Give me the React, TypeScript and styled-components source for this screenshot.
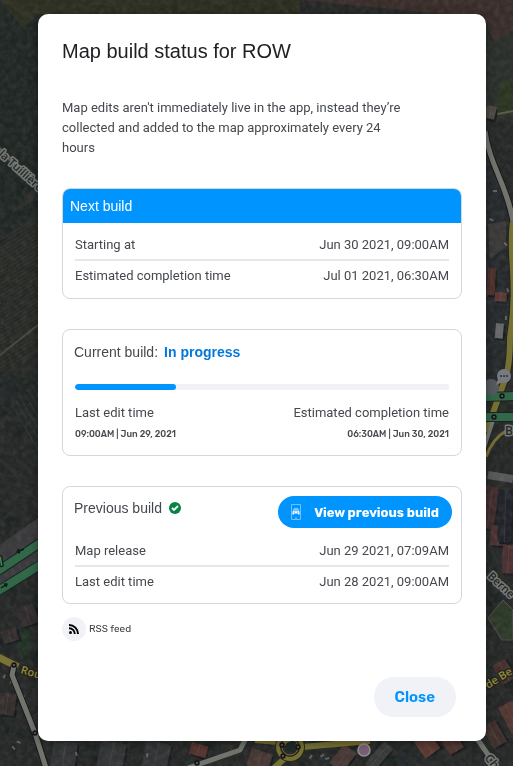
import React from "react";
import styled, { createGlobalStyle } from "styled-components";

const GlobalStyle = createGlobalStyle`
  *, *::before, *::after { box-sizing: border-box; }
  body { margin: 0; background: #222523; color: #45494e; font-family: Roboto, sans-serif; }
  button { border: 0; cursor: pointer; }
  h1, h2, p, dl, dd { margin: 0; }
`;

const Backdrop = styled.svg`
  position: fixed;
  inset: 0;
  width: 100%;
  height: 100%;
`;

const Overlay = styled.main`
  position: relative;
  min-height: 100vh;
  padding: 14px 27px 24px 38px;
  display: flex;
  justify-content: center;
  align-items: flex-start;
`;

const Dialog = styled.section`
  width: 100%;
  max-width: 560px;
  padding: 24px;
  border-radius: 10px;
  background: #fff;
  box-shadow: 0 2px 8px rgba(0, 0, 0, 0.4);
`;

const Title = styled.h1`
  font-family: "Liberation Sans", Arial, sans-serif;
  font-size: 20px;
  line-height: 26px;
  font-weight: 400;
  color: #202124;
`;

const Intro = styled.p`
  max-width: 350px;
  margin-top: 34px;
  font-size: 13px;
  line-height: 20px;
`;

const Card = styled.section`
  margin-top: 30px;
  border: 1px solid #d5d7db;
  border-radius: 8px;
  overflow: hidden;
`;

const BlueHeading = styled.h2`
  padding: 0 7px;
  font-family: "Liberation Sans", Arial, sans-serif;
  font-size: 14px;
  line-height: 34px;
  font-weight: 400;
  color: #fff;
  background: #0094ff;
`;

const CardHeader = styled.div<{ $withAction?: boolean }>`
  display: flex;
  align-items: flex-start;
  justify-content: space-between;
  height: ${(p) => (p.$withAction ? 48 : 54)}px;
  padding: ${(p) => (p.$withAction ? "9px 9px 0 11px" : "10px 11px 0")};
`;

const CardHeading = styled.h2`
  display: flex;
  align-items: center;
  gap: 6px;
  font-family: "Liberation Sans", Arial, sans-serif;
  font-size: 14px;
  line-height: 24px;
  font-weight: 400;
`;

const Status = styled.strong`
  color: #0078dc;
  font-weight: 700;
`;

const Rows = styled.dl<{ $compact?: boolean }>`
  padding: ${(p) => (p.$compact ? "1px 12px 7px" : "7px 12px 8px")};
`;

const Row = styled.div`
  display: flex;
  justify-content: space-between;
  font-size: 13px;
  line-height: 29px;
  & + & { border-top: 2px solid #e6e7e9; }
`;

const Progress = styled.progress`
  display: block;
  appearance: none;
  width: calc(100% - 24px);
  height: 6px;
  margin: 0 12px;
  border: 0;
  border-radius: 3px;
  overflow: hidden;
  background: #f0f2f7;
  &::-webkit-progress-bar { background: #f0f2f7; border-radius: 3px; }
  &::-webkit-progress-value { background: #0094ff; border-radius: 3px; }
`;

const Times = styled.dl`
  display: flex;
  justify-content: space-between;
  padding: 12px 12px 11px;
`;

const TimeItem = styled.div<{ $end?: boolean }>`
  text-align: ${(p) => (p.$end ? "right" : "left")};
  dt { font-size: 13px; line-height: 22px; }
  dd { font-family: Rubik, Roboto, sans-serif; font-size: 9px; line-height: 20px; font-weight: 500; }
`;

const PrimaryButton = styled.button`
  display: flex;
  align-items: center;
  gap: 12px;
  height: 32px;
  padding: 0 13px 0 12px;
  border-radius: 16px;
  font-family: Rubik, Roboto, sans-serif;
  font-size: 13px;
  font-weight: 700;
  color: #fff;
  background: #0094ff;
`;

const FeedLink = styled.a`
  display: inline-flex;
  align-items: center;
  gap: 3px;
  margin-top: 13px;
  font-family: Rubik, Roboto, sans-serif;
  font-size: 10px;
  line-height: 24px;
  color: #3c4045;
  text-decoration: none;
`;

const FeedBadge = styled.span`
  display: grid;
  place-items: center;
  width: 24px;
  height: 24px;
  border-radius: 50%;
  background: #f0f2f7;
`;

const Footer = styled.footer`
  display: flex;
  justify-content: flex-end;
  padding: 36px 6px 0 0;
`;

const CloseButton = styled.button`
  height: 40px;
  padding: 0 21px;
  border-radius: 20px;
  font-family: Rubik, Roboto, sans-serif;
  font-size: 15px;
  font-weight: 600;
  color: #0094ff;
  background: #f0f2f7;
`;

const random = (seed: number) => {
  const n = Math.sin(seed * 127.1) * 43758.5453;
  return n - Math.floor(n);
};

const foliage = Array.from({ length: 520 }, (_, i) => ({
  x: random(i + 1) * 513,
  y: 385 + random(i + 701) * 381,
  r: 2 + random(i + 1409) * 6,
  fill: ["#1b2321", "#272c2a", "#24292c", "#2d2c29", "#1c2120"][i % 5],
}));

const roofs = [
  [488, 268, 8, 27, 3, "#4b2d28"], [495, 292, 12, 9, 4, "#5a3935"],
  [496, 323, 8, 15, 5, "#656767"], [487, 105, 10, 13, 12, "#48463f"],
  [486, 486, 13, 42, 7, "#3e2a2b"], [491, 525, 17, 20, 4, "#4a3031"],
  [503, 545, 12, 28, 3, "#4a3030"], [499, 490, 14, 52, 2, "#202329"],
  [492, 666, 15, 22, -30, "#432e2b"], [498, 708, 16, 30, -28, "#513530"],
  [482, 728, 15, 24, -30, "#3e2e2b"], [192, 742, 17, 12, 15, "#54322c"],
  [252, 748, 22, 18, 18, "#453632"], [344, 744, 16, 24, 38, "#453633"],
  [414, 742, 18, 20, -35, "#5a3931"], [440, 738, 16, 20, -30, "#4c332d"],
  [0, 632, 16, 13, -18, "#332d2d"], [16, 609, 18, 20, -20, "#302a2c"],
  [0, 692, 17, 22, 8, "#332d2b"], [384, 741, 12, 30, 40, "#373838"],
  [54, 740, 24, 28, 8, "#303234"], [101, 740, 26, 28, 10, "#313335"],
  [147, 740, 25, 28, 12, "#303234"],
] as const;

const cars = [[493, 190], [490, 218], [505, 242], [508, 288], [507, 316], [6, 675], [14, 681], [25, 697], [28, 710], [20, 744], [14, 750], [76, 756], [146, 757], [309, 758], [320, 756], [325, 758]];
const junctions = [[14, 665], [35, 733], [502, 396], [494, 417], [197, 763], [298, 747], [283, 756], [282, 745]];

const MapBackground = () => (
  <Backdrop viewBox="0 0 513 766" preserveAspectRatio="xMidYMin slice" aria-hidden="true">
    <defs>
      <filter id="ground" x="0" y="0" width="100%" height="100%">
        <feTurbulence type="fractalNoise" baseFrequency="0.18" numOctaves="4" seed="8" />
        <feColorMatrix values="0 0 0 0 .28  0 0 0 0 .28  0 0 0 0 .27  .9 .9 0 0 -.65" />
      </filter>
    </defs>
    <rect width="513" height="766" fill="#242726" />
    {foliage.map((f, i) => <circle key={i} cx={f.x} cy={f.y} r={f.r} fill={f.fill} opacity=".65" />)}
    <path d="M0 0H55L38 60V385H0Z" fill="#1f2623" />
    <path d="M0 0H160V14H40L23 28Z" fill="#30321f" opacity=".7" />
    <path d="M160 0H300V14H160Z" fill="#2b2c20" />
    <path d="M300 0H513V31L494 43L484 18Z" fill="#382c29" />
    <path d="M482 20L493 43L513 32V125L486 109Z" fill="#292e2a" />
    <path d="M501 82l12-6v37l-19 7Z" fill="#2a3320" />
    <path d="M484 140L495 165L513 222V385H484Z" fill="#25292b" />
    <path d="M488 224l18-3v26l-16 12Z" fill="#3a3836" />
    <path d="M0 245L38 207V382L0 372Z" fill="#252824" />
    {Array.from({ length: 34 }, (_, i) => (
      <path key={i} d={`M0 ${240 + i * 4}L38 ${217 + i * 4}`} stroke="#353831" strokeWidth=".6" />
    ))}
    {Array.from({ length: 8 }, (_, i) => (
      <path key={i} d={`M${12 + i * 4} ${405 - i * 4}l32 55`} stroke="#323d33" strokeWidth=".7" />
    ))}
    <path d="M0 355L38 325" stroke="#4a453f" strokeWidth="2" />
    <path d="M12 212L38 200V188L29 192Z" fill="#2b2c29" />
    <circle cx="23" cy="187" r="2" fill="#12191d" />
    <path d="M488 618L503 600L513 610V640L502 640Z" fill="#2b3827" stroke="#514c43" />
    <path d="M488 116l25-5" stroke="#5b5a4d" strokeWidth="2" />
    <path d="M488 475l25 4" stroke="#555759" strokeWidth="8" />
    <path d="M0 545L38 518V570L0 592Z" fill="#39393b" />
    <path d="M16 636l10-10 10 18-16 16Z" fill="#223024" />
    {roofs.map(([x, y, w, h, a, fill], i) => (
      <g key={i} transform={`rotate(${a} ${x} ${y})`}>
        <rect x={x + 2} y={y + 2} width={w} height={h} fill="#171b1c" />
        <rect x={x} y={y} width={w} height={h} fill={fill} />
        <path d={`M${x + w / 2} ${y}v${h}`} stroke="#8c7067" strokeWidth=".5" opacity=".4" />
      </g>
    ))}
    {cars.map(([x, y], i) => <rect key={i} x={x} y={y} width="4" height="2" fill="#858888" opacity=".6" transform={`rotate(${i * 23} ${x} ${y})`} />)}
    <rect width="513" height="766" filter="url(#ground)" opacity=".2" />

    <g fill="none" strokeLinejoin="round">
      <path d="M-3 147Q22 170 43 190" stroke="#555852" strokeWidth="4" />
      <path d="M485 131C489 164 508 187 513 222" stroke="#171a1a" strokeWidth="7" />
      <path d="M485 131C489 164 508 187 513 222" stroke="#71736c" strokeWidth="5" />
      <path d="M513 222C508 255 519 280 510 338Q510 370 503 385L486 432" stroke="#24251b" strokeWidth="8" />
      <path d="M513 222C508 255 519 280 510 338Q510 370 503 385L486 432" stroke="#777034" strokeWidth="6" />
      <path d="M494 417L484 448" stroke="#74766f" strokeWidth="4" />
      <path d="M486 457Q493 438 506 431" stroke="#777034" strokeWidth="3" />
      <path d="M-2 571L40 543M-2 591L40 565M484 397L515 396M484 417H515" stroke="#18251e" strokeWidth="10" />
      <path d="M-2 571L40 543M-2 591L40 565M484 397L515 396M484 417H515" stroke="#326749" strokeWidth="8" />
      <path d="M24 549l-7 3m2-3l-2 3 3 1M1 588l6-4m-3 0l3 0-1 3" stroke="#101b16" strokeWidth="1.5" />
      <path d="M-2 657L18 667" stroke="#7b7334" strokeWidth="7" />
      <path d="M14 666L12 675L35 733L46 768" stroke="#171a1a" strokeWidth="7" />
      <path d="M14 666L12 675L35 733L46 768M245 740L240 750L188 768M478 740L491 759" stroke="#71736c" strokeWidth="5" />
      <path d="M255 740L290 743M302 747L370 741M286 757L272 770" stroke="#777034" strokeWidth="6" />
      <circle cx="290" cy="747" r="12" stroke="#282819" strokeWidth="6" />
      <circle cx="290" cy="747" r="12" stroke="#777034" strokeWidth="4" />
      <circle cx="290" cy="747" r="8" stroke="#777034" />
    </g>
    <circle cx="290" cy="747" r="5" fill="#202929" />
    {junctions.map(([x, y], i) => <circle key={i} cx={x} cy={y} r="2" fill="#555" stroke="#111" strokeWidth="1.4" />)}
    <g fontFamily="Open Sans, sans-serif" fontSize="12" fontWeight="600" paintOrder="stroke" strokeWidth="3" strokeLinejoin="round">
      <text x="-2" y="155" fill="#242729" stroke="#777a77" fontSize="11" transform="rotate(42 -2 155)">la Tuillière</text>
      <text x="20" y="673" fill="#928943" stroke="#25251b" fontSize="11" transform="rotate(17 20 673)">Rou</text>
      <text x="505" y="435" fill="#242729" stroke="#777a77">B</text>
      <text x="487" y="577" fill="#242729" stroke="#777a77" fontSize="11" transform="rotate(43 487 577)">Berne</text>
      <text x="488" y="689" fill="#928943" stroke="#25251b" fontSize="11" transform="rotate(-32 488 689)">de Be</text>
      <text x="484" y="758" fill="#242729" stroke="#777a77" transform="rotate(52 484 758)">Ch</text>
      <text x="0" y="566" fill="#3e8f60" stroke="#142119" transform="rotate(-10 0 566)">l</text>
    </g>
    <circle cx="364" cy="750" r="6" fill="#795e77" stroke="#93908f" strokeWidth="1.5" />
    <circle cx="491" cy="387" r="8" fill="#555a60" />
    <circle cx="504" cy="376" r="7" fill="#777a80" />
    <path d="M498 379l-2 6 7-3" fill="#777a80" />
    <path d="M501 376h.1M504 376h.1M507 376h.1" stroke="#303338" strokeWidth="2" strokeLinecap="round" />
  </Backdrop>
);

const CheckIcon = () => (
  <svg width="14" height="14" viewBox="0 0 14 14" role="img" aria-label="Complete">
    <circle cx="7" cy="7" r="6" fill="#078342" />
    <path d="M4 7l2 2 4-4" fill="none" stroke="#fff" strokeWidth="1.8" />
  </svg>
);

const PhoneIcon = () => (
  <svg width="12" height="18" viewBox="0 0 12 18" fill="none" aria-hidden="true">
    <path d="M1.5 1.5h9v15h-9z" stroke="#8dceff" strokeWidth=".8" />
    <path d="M2.5 8.2h.7L4 5.5h4l.8 2.7h.7v3.3H8v-1H4v1H2.5z" fill="#fff" />
    <path d="M4.3 7.9l.5-1.4h2.4l.5 1.4zM3.6 9.3h1.2M7.2 9.3h1.2" stroke="#0094ff" strokeWidth=".7" />
    <path d="M5 15h2" stroke="#8dceff" />
  </svg>
);

const FeedIcon = () => (
  <svg width="12" height="12" viewBox="0 0 12 12" aria-hidden="true">
    <circle cx="2.5" cy="9.5" r="1.5" fill="#000" />
    <path d="M1 5.2A5.8 5.8 0 0 1 6.8 11M1 2a9 9 0 0 1 9 9" fill="none" stroke="#000" strokeWidth="2" />
  </svg>
);

const DataRow = ({ label, value }: { label: string; value: string }) => (
  <Row><dt>{label}</dt><dd>{value}</dd></Row>
);

export default function App() {
  return (
    <>
      <GlobalStyle />
      <MapBackground />
      <Overlay>
        <Dialog role="dialog" aria-labelledby="dialog-title">
          <Title id="dialog-title">Map build status for ROW</Title>
          <Intro>Map edits aren't immediately live in the app, instead they’re collected and added to the map approximately every 24 hours</Intro>
          <Card>
            <BlueHeading>Next build</BlueHeading>
            <Rows>
              <DataRow label="Starting at" value="Jun 30 2021, 09:00AM" />
              <DataRow label="Estimated completion time" value="Jul 01 2021, 06:30AM" />
            </Rows>
          </Card>
          <Card>
            <CardHeader>
              <CardHeading>Current build: <Status>In progress</Status></CardHeading>
            </CardHeader>
            <Progress value={27} max={100} aria-label="Current build progress" />
            <Times>
              <TimeItem><dt>Last edit time</dt><dd>09:00AM | Jun 29, 2021</dd></TimeItem>
              <TimeItem $end><dt>Estimated completion time</dt><dd>06:30AM | Jun 30, 2021</dd></TimeItem>
            </Times>
          </Card>
          <Card>
            <CardHeader $withAction>
              <CardHeading>Previous build <CheckIcon /></CardHeading>
              <PrimaryButton type="button"><PhoneIcon />View previous build</PrimaryButton>
            </CardHeader>
            <Rows $compact>
              <DataRow label="Map release" value="Jun 29 2021, 07:09AM" />
              <DataRow label="Last edit time" value="Jun 28 2021, 09:00AM" />
            </Rows>
          </Card>
          <FeedLink href="#rss"><FeedBadge><FeedIcon /></FeedBadge>RSS feed</FeedLink>
          <Footer><CloseButton type="button">Close</CloseButton></Footer>
        </Dialog>
      </Overlay>
    </>
  );
}
